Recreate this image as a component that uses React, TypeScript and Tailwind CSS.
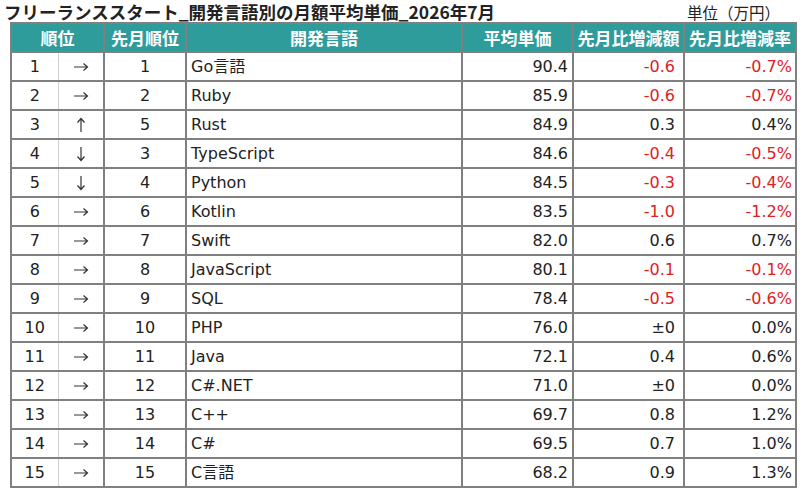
const rows = [
  [1, "r", 1, "Go言語", "90.4", "-0.6", "-0.7%"],
  [2, "r", 2, "Ruby", "85.9", "-0.6", "-0.7%"],
  [3, "u", 5, "Rust", "84.9", "0.3", "0.4%"],
  [4, "d", 3, "TypeScript", "84.6", "-0.4", "-0.5%"],
  [5, "d", 4, "Python", "84.5", "-0.3", "-0.4%"],
  [6, "r", 6, "Kotlin", "83.5", "-1.0", "-1.2%"],
  [7, "r", 7, "Swift", "82.0", "0.6", "0.7%"],
  [8, "r", 8, "JavaScript", "80.1", "-0.1", "-0.1%"],
  [9, "r", 9, "SQL", "78.4", "-0.5", "-0.6%"],
  [10, "r", 10, "PHP", "76.0", "±0", "0.0%"],
  [11, "r", 11, "Java", "72.1", "0.4", "0.6%"],
  [12, "r", 12, "C#.NET", "71.0", "±0", "0.0%"],
  [13, "r", 13, "C++", "69.7", "0.8", "1.2%"],
  [14, "r", 14, "C#", "69.5", "0.7", "1.0%"],
  [15, "r", 15, "C言語", "68.2", "0.9", "1.3%"],
] as const

const red = (v: string) => (v.startsWith("-") ? "text-[#e0201e]" : "text-[#222]")

// thin arrow like the spreadsheet font
function Arrow({ dir }: { dir: string }) {
  const rot = dir === "u" ? "-rotate-90" : dir === "d" ? "rotate-90" : ""
  return (
    <svg viewBox="0 0 16 16" className={"inline-block w-[16px] h-[16px] " + rot} fill="none" stroke="#333" strokeWidth="1.2">
      <path d="M1 8h13.5M10.5 4.5 14.5 8l-4 3.5" />
    </svg>
  )
}

export default function App() {
  return (
    <div className="w-[803px] h-[495px] bg-white font-['DejaVu_Sans','Noto_Sans_CJK_JP',sans-serif] text-[#222]">
      <div className="flex items-end justify-between h-[22px] pl-[4px] pr-[23px]">
        <h1 className="text-[17.5px] font-bold leading-[20px] font-['Noto_Sans_CJK_JP',sans-serif]">
          フリーランススタート_開発言語別の月額平均単価_2026年7月
        </h1>
        <span className="text-[15.5px] leading-[20px] font-['Noto_Sans_CJK_JP',sans-serif]">単位（万円）</span>
      </div>
      <div className="pl-[10px]">
        <table className="border-collapse border-2 border-[#333] text-[16px] table-fixed w-[785px]">
          <colgroup>
            <col className="w-[47px]" />
            <col className="w-[46px]" />
            <col className="w-[82px]" />
            <col className="w-[276px]" />
            <col className="w-[111px]" />
            <col className="w-[111px]" />
            <col className="w-[112px]" />
          </colgroup>
          <thead>
            <tr className="h-[29px] bg-[#2f9c9c] text-white font-bold font-['Noto_Sans_CJK_JP',sans-serif] text-[17px] leading-[20px]">
              <th colSpan={2} className="border-2 border-[#808080] text-center">順位</th>
              <th className="border-2 border-[#808080] text-center">先月順位</th>
              <th className="border-2 border-[#808080] text-center">開発言語</th>
              <th className="border-2 border-[#808080] text-center">平均単価</th>
              <th className="border-2 border-[#808080] text-center">先月比増減額</th>
              <th className="border-2 border-[#808080] text-center">先月比増減率</th>
            </tr>
          </thead>
          <tbody>
            {rows.map((r) => (
              <tr key={r[0]} className="h-[29px] leading-[18px]">
                <td className="border-y-2 border-l-2 border-r border-y-[#808080] border-l-[#808080] border-r-[#d0d0d0] border-r-dotted text-center">{r[0]}</td>
                <td className="border-y-2 border-r-2 border-[#808080] text-center align-middle leading-none">
                  <Arrow dir={r[1]} />
                </td>
                <td className="border-2 border-[#808080] text-center">{r[2]}</td>
                <td className="border-2 border-[#808080] pl-[4px]">{r[3]}</td>
                <td className="border-2 border-[#808080] text-right pr-[4px]">{r[4]}</td>
                <td className={"border-2 border-[#808080] text-right pr-[8px] " + red(r[5])}>{r[5]}</td>
                <td className={"border-2 border-[#808080] text-right pr-[3px] " + red(r[6])}>{r[6]}</td>
              </tr>
            ))}
          </tbody>
        </table>
      </div>
    </div>
  )
}
